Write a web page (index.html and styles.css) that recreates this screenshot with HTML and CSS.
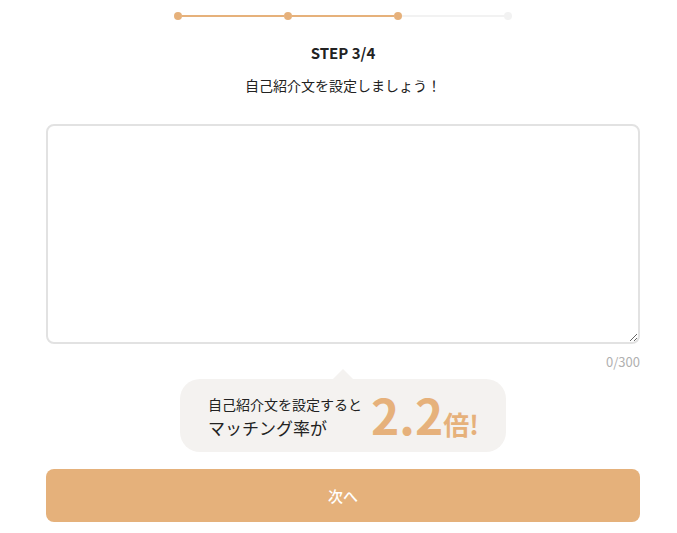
FILE: index.html
```html
<!DOCTYPE html>
<html lang="ja">
<head>
    <meta charset="UTF-8">
    <meta name="viewport" content="width=device-width, initial-scale=1.0">
    <title>プロフィール設定</title>
    <link rel="stylesheet" href="styles.css">
</head>
<body>
    <div class="page">
        <div class="progress">
            <span class="dot done"></span>
            <span class="seg done"></span>
            <span class="dot done"></span>
            <span class="seg done"></span>
            <span class="dot done"></span>
            <span class="seg"></span>
            <span class="dot"></span>
        </div>

        <h1 class="step">STEP 3/4</h1>
        <p class="lead">自己紹介文を設定しましょう！</p>

        <textarea class="intro" maxlength="300"></textarea>
        <div class="count">0/300</div>

        <div class="bubble">
            <div class="bubble-text">
                <span class="small">自己紹介文を設定すると</span>
                <span class="big">マッチング率が</span>
            </div>
            <div class="rate"><span class="num">2.2</span><span class="unit">倍!</span></div>
        </div>

        <button class="next">次へ</button>
    </div>
</body>
</html>
```

FILE: styles.css
```css
body {
    margin: 0;
    font-family: "Noto Sans CJK JP", "Noto Sans", sans-serif;
    color: #222;
    background-color: #fff;
}
.page {
    padding: 12px 37px 0 46px;
    display: flex;
    flex-direction: column;
    align-items: center;
}
.progress {
    display: flex;
    align-items: center;
    width: 339px;
}
.dot {
    width: 8px;
    height: 8px;
    border-radius: 50%;
    background-color: #f2f2f2;
    flex: none;
}
.seg {
    flex: 1;
    height: 2px;
    background-color: #f2f2f2;
}
.dot.done,
.seg.done {
    background-color: #e6b17b;
}
.step {
    margin: 22px 0 0;
    font-size: 15px;
    font-weight: 700;
    line-height: 22px;
}
.lead {
    margin: 10px 0 0;
    font-size: 14px;
    line-height: 22px;
}
.intro {
    box-sizing: border-box;
    margin-top: 28px;
    width: 100%;
    height: 220px;
    border: 2px solid #e2e2e2;
    border-radius: 8px;
    padding: 10px;
    font-family: inherit;
    font-size: 14px;
    outline: none;
}
.count {
    align-self: flex-end;
    margin-top: 9px;
    font-size: 13px;
    line-height: 18px;
    color: #b0b0b0;
}
.bubble {
    position: relative;
    margin-top: 8px;
    width: 326px;
    height: 73px;
    box-sizing: border-box;
    padding: 0 0 0 28px;
    border-radius: 20px;
    background-color: #f4f2f0;
    display: flex;
    align-items: center;
}
.bubble::before {
    content: "";
    position: absolute;
    top: -10px;
    left: 153px;
    border-left: 10px solid transparent;
    border-right: 10px solid transparent;
    border-bottom: 10px solid #f4f2f0;
}
.bubble-text {
    display: flex;
    flex-direction: column;
    margin-top: 2px;
}
.small {
    font-size: 14px;
    line-height: 22px;
}
.big {
    font-size: 17px;
    line-height: 26px;
}
.rate {
    margin-left: 9px;
    color: #e6b17b;
    font-weight: 700;
    white-space: nowrap;
}
.num {
    font-size: 48px;
    line-height: 50px;
}
.unit {
    font-size: 26px;
}
.next {
    margin-top: 17px;
    width: 100%;
    height: 53px;
    border: none;
    border-radius: 8px;
    background-color: #e5b17b;
    color: #fff;
    font-family: inherit;
    font-size: 15px;
    font-weight: 500;
    cursor: pointer;
}
```
